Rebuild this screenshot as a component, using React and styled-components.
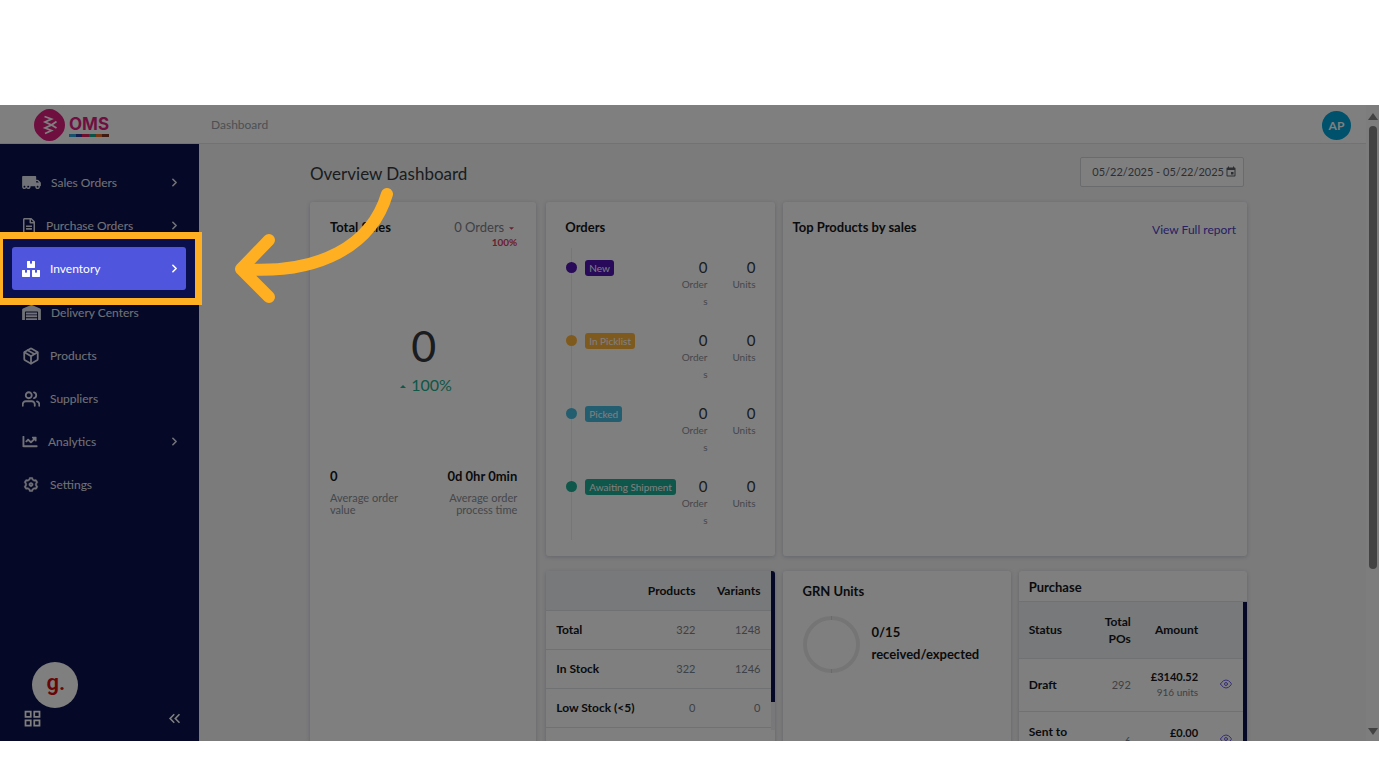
import React from "react";
import styled, { createGlobalStyle } from "styled-components";
import {
  FaTruckMoving,
  FaRegFileAlt,
  FaBoxes,
  FaWarehouse,
  FaChartLine,
} from "react-icons/fa";
import { FiEye, FiUsers, FiChevronRight } from "react-icons/fi";
import { LuPackage } from "react-icons/lu";
import { RiSettings3Line } from "react-icons/ri";
import { MdEvent, MdKeyboardDoubleArrowLeft, MdOutlineGridView } from "react-icons/md";

const GlobalStyle = createGlobalStyle`
  * { box-sizing: border-box; }
  body {
    margin: 0;
    background: #fff;
    font-family: Lato, "Liberation Sans", sans-serif;
    font-size: 12px;
    color: #343a40;
  }
  h1, h2, p, ul { margin: 0; padding: 0; }
  ul { list-style: none; }
`;

const Page = styled.div`
  height: 100vh;
  padding: 105px 0 35px;
  display: flex;
`;

const Frame = styled.div`
  position: relative;
  flex: 1;
  min-width: 0;
  display: flex;
  overflow: hidden;
  background: #f6f6f8;
`;

const Dim = styled.div`
  position: absolute;
  inset: 0;
  z-index: 1;
  background: rgba(0, 0, 0, 0.5);
  pointer-events: none;
`;

const Shell = styled.div`
  flex: 1;
  min-width: 0;
  display: flex;
  flex-direction: column;
`;

const Header = styled.header`
  flex: none;
  height: 39px;
  display: flex;
  align-items: center;
  padding: 0 15px 0 34px;
  background: #fff;
  border-bottom: 1px solid #e4e4e8;
`;

const Logo = styled.a`
  display: flex;
  align-items: center;
  gap: 4px;
  width: 177px;
  padding-top: 2px;
  text-decoration: none;
`;

const LogoText = styled.span`
  display: flex;
  flex-direction: column;
  font: 700 17px/20px Inter, sans-serif;
  color: #dc1e80;
`;

const LogoStripe = styled.span`
  display: flex;
  height: 3px;
`;

const StripePart = styled.span`
  flex: 1;
  background: ${(p) => p.$color};
`;

const Crumb = styled.span`
  flex: 1;
  font-size: 12px;
  color: #9ba0a8;
`;

const Avatar = styled.button`
  width: 29px;
  height: 29px;
  margin-top: 3px;
  padding: 0;
  border: 0;
  border-radius: 50%;
  background: #00a2d8;
  color: #fff;
  font: 700 12px/29px Lato, sans-serif;
`;

const Body = styled.div`
  flex: 1;
  min-height: 0;
  display: flex;
`;

const Sidebar = styled.aside`
  flex: none;
  width: 199px;
  display: flex;
  flex-direction: column;
  justify-content: space-between;
  padding: 17px 12px 12px;
  background: #0a104c;
`;

const NavItem = styled.li`
  position: relative;
  z-index: ${(p) => (p.$active ? 2 : 0)};
  margin: 0 1px ${(p) => (p.$active ? 1 : 0)}px 0;

  &::before {
    content: "";
    display: ${(p) => (p.$active ? "block" : "none")};
    position: absolute;
    inset: -15px -16px;
    border: 7px solid #ffb022;
    background: #0a104c;
  }
`;

const NavLink = styled.a`
  position: relative;
  display: flex;
  align-items: center;
  gap: 10px;
  height: 43px;
  padding: 0 5px 0 10px;
  border-radius: 3px;
  background: ${(p) => (p.$active ? "#4f55dc" : "transparent")};
  color: ${(p) => (p.$active ? "#fff" : "#e2e4ee")};
  font-size: 12px;
  text-decoration: none;
`;

const NavIcon = styled.span`
  flex: none;
  display: flex;
  width: ${(p) => p.$w}px;

  svg {
    width: ${(p) => p.$w}px;
    height: ${(p) => p.$h}px;
    stroke-width: ${(p) => p.$stroke};
  }
`;

const NavLabel = styled.span`
  flex: 1;
`;

const SideFoot = styled.div`
  display: flex;
  flex-direction: column;
  padding: 0 3px 0 10px;
`;

const ChatButton = styled.button`
  width: 46px;
  height: 46px;
  margin-left: 10px;
  padding: 0 0 5px 2px;
  border: 0;
  border-radius: 50%;
  background: #fff;
  color: #d00a0a;
  font: 600 22px/36px Roboto, sans-serif;
`;

const FootRow = styled.div`
  display: flex;
  justify-content: space-between;
  align-items: center;
`;

const IconButton = styled.button`
  display: inline-flex;
  padding: 0;
  border: 0;
  background: none;
  color: ${(p) => p.$color || "#fff"};
`;

const Main = styled.main`
  flex: 1;
  min-width: 0;
  display: flex;
  flex-direction: column;
  padding: 13px 119px 0 111px;
`;

const TitleRow = styled.div`
  flex: none;
  display: flex;
  justify-content: space-between;
  align-items: center;
  margin: 0 3px 15px 0;
`;

const PageTitle = styled.h1`
  font-size: 17px;
  line-height: 26px;
  font-weight: 400;
  padding-top: 4px;
`;

const DateButton = styled.button`
  display: flex;
  align-items: center;
  gap: 1px;
  height: 30px;
  padding: 0 6px 0 11px;
  border: 1px solid #d4d6da;
  border-radius: 2px;
  background: #fff;
  color: #5a5e66;
  font: 400 11px/28px Lato, sans-serif;
`;

const Grid = styled.div`
  flex: 1;
  display: grid;
  grid-template-columns: repeat(4, minmax(0, 1fr));
  grid-template-rows: 354px 400px;
  gap: 15px 8px;
`;

const Card = styled.section`
  grid-column: span ${(p) => p.$cols || 1};
  grid-row: span ${(p) => p.$rows || 1};
  min-width: 0;
  padding: ${(p) => p.$pad || "0"};
  border-radius: 3px;
  background: #fff;
  box-shadow: 0 1px 4px rgba(40, 50, 80, 0.22);
  overflow: hidden;
`;

const SalesCard = styled(Card)`
  margin-right: 2px;
`;

const CardTitle = styled.h2`
  font-size: 13px;
  line-height: 18px;
  font-weight: 700;
  color: #14161a;
`;

const Split = styled.div`
  display: flex;
  justify-content: space-between;
`;

const OrdersNote = styled.p`
  display: flex;
  flex-direction: column;
  align-items: flex-end;
  color: #7c828a;
  font-size: 13px;
  line-height: 18px;
`;

const Percent = styled.span`
  color: #d8405c;
  font-size: 10px;
  line-height: 12px;
  font-weight: 700;
`;

const Caret = styled.svg`
  width: ${(p) => p.$w || 6}px;
  height: 4px;
  margin: 0 ${(p) => p.$right || 0}px 2px 5px;
  fill: ${(p) => p.$color};
`;

const BigStat = styled.div`
  display: flex;
  flex-direction: column;
  align-items: center;
  padding: 72px 0 68px;
`;

const BigNumber = styled.span`
  font-size: 43px;
  line-height: 51px;
`;

const Growth = styled.span`
  color: #22ac8c;
  font-size: 16px;
  line-height: 28px;
`;

const Average = styled.div`
  width: 76px;
  display: flex;
  flex-direction: column;
  align-items: ${(p) => (p.$end ? "flex-end" : "flex-start")};
  text-align: ${(p) => (p.$end ? "right" : "left")};
  white-space: nowrap;
`;

const AverageLabel = styled.p`
  margin-top: 7px;
  white-space: pre-line;
  color: #8a9098;
  font-size: 11px;
  line-height: 12px;
`;

const Timeline = styled.ul`
  margin: 12px 0 0 6px;
  border-left: 1px solid #ececee;
`;

const Step = styled.li`
  display: flex;
  align-items: flex-start;
  height: 73px;
  padding-top: 10px;
  margin-left: -6px;
`;

const Dot = styled.span`
  flex: none;
  width: 11px;
  height: 11px;
  margin: 4px 8px 0 0;
  border-radius: 50%;
  background: ${(p) => p.$color};
`;

const Badge = styled.span`
  margin-top: 2px;
  padding: 0 4px;
  border-radius: 3px;
  background: ${(p) => p.$color};
  color: #fff;
  font-size: 10px;
  line-height: 16px;
  white-space: nowrap;
`;

const Counts = styled.div`
  flex: 1;
  display: flex;
  justify-content: flex-end;
  gap: 22px;
`;

const Count = styled.p`
  width: 26px;
  display: flex;
  flex-direction: column;
  align-items: flex-end;
  font-size: 15px;
  line-height: 18px;
`;

const CountLabel = styled.span`
  color: #8a9098;
  font-size: 10px;
  line-height: 17px;
  text-align: right;
  white-space: pre-line;
`;

const TextLink = styled.a`
  color: #5040c8;
  font-size: 12px;
  line-height: 24px;
  text-decoration: none;
`;

const Scroller = styled.div`
  display: flex;
  align-items: flex-start;
`;

const InnerBar = styled.div`
  flex: none;
  width: 4px;
  height: ${(p) => p.$h}px;
  background: #f1f1f4;

  &::before {
    content: "";
    display: block;
    height: ${(p) => p.$thumb}px;
    background: #0a104c;
  }
`;

const Table = styled.table`
  flex: 1;
  width: 100%;
  min-width: 0;
  border-collapse: collapse;
  table-layout: fixed;
`;

const Row = styled.tr`
  height: ${(p) => p.$h}px;
  background: ${(p) => (p.$head ? "#f0f2f5" : "#fff")};
  border-bottom: 1px solid #dfe2e7;
`;

const Th = styled.th`
  width: ${(p) => p.$w || "auto"};
  padding: 0 ${(p) => p.$right || 0}px 0 ${(p) => (p.$end ? 0 : 10)}px;
  text-align: ${(p) => (p.$end ? "right" : "left")};
  color: #14161a;
  font-size: 12px;
  line-height: 17px;
  font-weight: 700;
`;

const Td = styled.td`
  padding: 0 ${(p) => p.$right || 0}px 0 0;
  text-align: right;
  color: #7c828a;
  font-size: 11px;
`;

const Amount = styled.span`
  display: block;
  color: #14161a;
  font-weight: 700;
  line-height: 16px;
`;

const Units = styled.span`
  display: block;
  font-size: 10px;
  line-height: 15px;
`;

const PurchaseTitle = styled.div`
  padding: 7px 10px 5px;
  border-bottom: 1px solid #dfe2e7;
`;

const Received = styled.div`
  display: flex;
  align-items: center;
  gap: 12px;
  margin-top: 16px;
`;

const ReceivedText = styled.p`
  padding-bottom: 4px;
  color: #14161a;
  font-size: 13px;
  line-height: 22px;
  font-weight: 700;
  white-space: pre-line;
`;

const PageBar = styled.div`
  flex: none;
  width: 13px;
  display: flex;
  flex-direction: column;
  align-items: center;
  justify-content: space-between;
  padding: 8px 0 6px;
  background: #fbfbfb;
`;

const PageThumb = styled.div`
  width: 8px;
  height: 443px;
  margin: 6px 0 auto;
  border-radius: 4px;
  background: #858585;
`;

const ArrowLayer = styled.svg`
  position: absolute;
  z-index: 3;
  left: 230px;
  top: 80px;
  width: 170px;
  height: 124px;
  fill: none;
  stroke: #ffb022;
  stroke-width: 12;
  stroke-linecap: round;
  stroke-linejoin: round;
`;

const nav = [
  { label: "Sales Orders", icon: FaTruckMoving, w: 19, h: 15, more: true },
  { label: "Purchase Orders", icon: FaRegFileAlt, w: 14, h: 16, more: true },
  { label: "Inventory", icon: FaBoxes, w: 18, h: 16, more: true, active: true },
  { label: "Delivery Centers", icon: FaWarehouse, w: 19, h: 15 },
  { label: "Products", icon: LuPackage, w: 18, h: 18, stroke: 2.4 },
  { label: "Suppliers", icon: FiUsers, w: 18, h: 18, stroke: 2.4 },
  { label: "Analytics", icon: FaChartLine, w: 16, h: 15, more: true },
  { label: "Settings", icon: RiSettings3Line, w: 18, h: 17, stroke: 0.7 },
];

const steps = [
  { label: "New", color: "#5212b4" },
  { label: "In Picklist", color: "#ffb53c" },
  { label: "Picked", color: "#46bce0" },
  { label: "Awaiting Shipment", color: "#1cae94" },
];

const stock = [
  ["Total", "322", "1248"],
  ["In Stock", "322", "1246"],
  ["Low Stock (<5)", "0", "0"],
  ["", "", ""],
];

const stripes = ["#2ea3dc", "#223a9c", "#e01f5a", "#14a58c", "#ee6a24", "#7c3420"];

function App() {
  return (
    <>
      <GlobalStyle />
      <Page>
        <Frame>
          <Shell>
            <Header>
              <Logo href="#">
                <svg width="31" height="32" viewBox="0 0 31 32" aria-hidden="true">
                  <path
                    d="M15.500 0C20 0 23 2 26 5C29.500 8 31 12 31 16C31 20 29.500 24 26 27C23 30 20 32 15.500 32C11 32 8 30 5 27C1.500 24 0 20 0 16C0 12 1.500 8 5 5C8 2 11 0 15.500 0Z"
                    fill="#dc1e80"
                  />
                  <path
                    d="M10.500 7.500l7 2.500-6.500 3 6.500 3-6.500 3 6.500 2.500-6.500 3M22.500 12.500l-5 3.500 5 3"
                    fill="none"
                    stroke="#fff"
                    strokeWidth="1.800"
                  />
                </svg>
                <LogoText>
                  OMS
                  <LogoStripe>
                    {stripes.map((c) => (
                      <StripePart key={c} $color={c} />
                    ))}
                  </LogoStripe>
                </LogoText>
              </Logo>
              <Crumb>Dashboard</Crumb>
              <Avatar>AP</Avatar>
            </Header>
            <Body>
              <Sidebar>
                <nav>
                  <ul>
                    {nav.map(({ label, icon: Icon, w, h, stroke = 0, more, active }) => (
                      <NavItem key={label} $active={active}>
                        <NavLink href="#" $active={active}>
                          <NavIcon $w={w} $h={h} $stroke={stroke}>
                            <Icon />
                          </NavIcon>
                          <NavLabel>{label}</NavLabel>
                          {more && <FiChevronRight size={13} strokeWidth={3} />}
                        </NavLink>
                      </NavItem>
                    ))}
                  </ul>
                </nav>
                <SideFoot>
                  <ChatButton>g.</ChatButton>
                  <FootRow>
                    <IconButton aria-label="Apps">
                      <MdOutlineGridView size={21} />
                    </IconButton>
                    <IconButton aria-label="Collapse menu">
                      <MdKeyboardDoubleArrowLeft size={19} />
                    </IconButton>
                  </FootRow>
                </SideFoot>
              </Sidebar>
              <Main>
                <TitleRow>
                  <PageTitle>Overview Dashboard</PageTitle>
                  <DateButton>
                    05/22/2025 - 05/22/2025
                    <MdEvent size={12} />
                  </DateButton>
                </TitleRow>
                <Grid>
                  <SalesCard $rows={2} $pad="16px 19px 16px 20px">
                    <Split>
                      <CardTitle>Total Sales</CardTitle>
                      <OrdersNote>
                        <span>
                          0 Orders
                          <Caret viewBox="0 0 6 4" $color="#d8405c" $right={3} $w={5}>
                            <path d="M0 1h6L3 4z" />
                          </Caret>
                        </span>
                        <Percent>100%</Percent>
                      </OrdersNote>
                    </Split>
                    <BigStat>
                      <BigNumber>0</BigNumber>
                      <Growth>
                        <Caret viewBox="0 0 6 4" $color="#22ac8c" $right={5}>
                          <path d="M0 3h6L3 0z" />
                        </Caret>
                        100%
                      </Growth>
                    </BigStat>
                    <Split>
                      <Average>
                        <CardTitle>0</CardTitle>
                        <AverageLabel>{"Average order\nvalue"}</AverageLabel>
                      </Average>
                      <Average $end>
                        <CardTitle>0d 0hr 0min</CardTitle>
                        <AverageLabel>{"Average order\nprocess time"}</AverageLabel>
                      </Average>
                    </Split>
                  </SalesCard>

                  <Card $pad="16px 19px">
                    <CardTitle>Orders</CardTitle>
                    <Timeline>
                      {steps.map((s) => (
                        <Step key={s.label}>
                          <Dot $color={s.color} />
                          <Badge $color={s.color}>{s.label}</Badge>
                          <Counts>
                            <Count>
                              0<CountLabel>{"Order\ns"}</CountLabel>
                            </Count>
                            <Count>
                              0<CountLabel>Units</CountLabel>
                            </Count>
                          </Counts>
                        </Step>
                      ))}
                    </Timeline>
                  </Card>

                  <Card $cols={2} $pad="16px 11px 16px 10px">
                    <Split>
                      <CardTitle>Top Products by sales</CardTitle>
                      <TextLink href="#">View Full report</TextLink>
                    </Split>
                  </Card>

                  <Card>
                    <Scroller>
                      <Table>
                        <thead>
                          <Row $h={39} $head>
                            <Th aria-label="Stock level" $w="40%" />
                            <Th $end $w="31%" $right={10}>Products</Th>
                            <Th $end $right={10}>Variants</Th>
                          </Row>
                        </thead>
                        <tbody>
                          {stock.map(([name, products, variants]) => (
                            <Row key={name} $h={39}>
                              <Th scope="row">{name}</Th>
                              <Td $right={10}>{products}</Td>
                              <Td $right={10}>{variants}</Td>
                            </Row>
                          ))}
                        </tbody>
                      </Table>
                      <InnerBar $h={159} $thumb={131} />
                    </Scroller>
                  </Card>

                  <Card $pad="11px 20px">
                    <CardTitle>GRN Units</CardTitle>
                    <Received>
                      <svg width="57" height="57" viewBox="0 0 57 57" aria-hidden="true">
                        <circle cx="28.500" cy="28.500" r="26.500" fill="none" stroke="#ebebed" strokeWidth="4" />
                        <path d="M28.500 0v4M28.500 53v4" stroke="#e6ccd4" strokeWidth="1" />
                      </svg>
                      <ReceivedText>{"0/15\nreceived/expected"}</ReceivedText>
                    </Received>
                  </Card>

                  <Card>
                    <PurchaseTitle>
                      <CardTitle>Purchase</CardTitle>
                    </PurchaseTitle>
                    <Scroller>
                      <Table>
                        <thead>
                          <Row $h={56} $head>
                            <Th $w="31%">Status</Th>
                            <Th $w="19%" $end>Total POs</Th>
                            <Th $w="30%" $end>Amount</Th>
                            <Th aria-label="View" />
                          </Row>
                        </thead>
                        <tbody>
                          <Row $h={53}>
                            <Th scope="row">Draft</Th>
                            <Td>292</Td>
                            <Td>
                              <Amount>£3140.52</Amount>
                              <Units>916 units</Units>
                            </Td>
                            <Td $right={11}>
                              <IconButton as="a" href="#" aria-label="View drafts" $color="#6a5cf0">
                                <FiEye size={12} />
                              </IconButton>
                            </Td>
                          </Row>
                          <Row $h={58}>
                            <Th scope="row">Sent to Supplier</Th>
                            <Td>6</Td>
                            <Td>
                              <Amount>£0.00</Amount>
                              <Units>0 units</Units>
                            </Td>
                            <Td $right={11}>
                              <IconButton as="a" href="#" aria-label="View sent" $color="#6a5cf0">
                                <FiEye size={12} />
                              </IconButton>
                            </Td>
                          </Row>
                        </tbody>
                      </Table>
                      <InnerBar $h={300} $thumb={200} />
                    </Scroller>
                  </Card>
                </Grid>
              </Main>
            </Body>
          </Shell>
          <PageBar>
            <svg width="10" height="7" viewBox="0 0 10 7" fill="#858585" aria-hidden="true">
              <path d="M5 0l5 7H0z" />
            </svg>
            <PageThumb />
            <svg width="10" height="7" viewBox="0 0 10 7" fill="#858585" aria-hidden="true">
              <path d="M5 7L0 0h10z" />
            </svg>
          </PageBar>
          <Dim />
          <ArrowLayer viewBox="230 185 170 124" aria-hidden="true">
            <path d="M387 194C372 245 320 275 241 269M269 240L241 269L269 297" />
          </ArrowLayer>
        </Frame>
      </Page>
    </>
  );
}

export default App;
